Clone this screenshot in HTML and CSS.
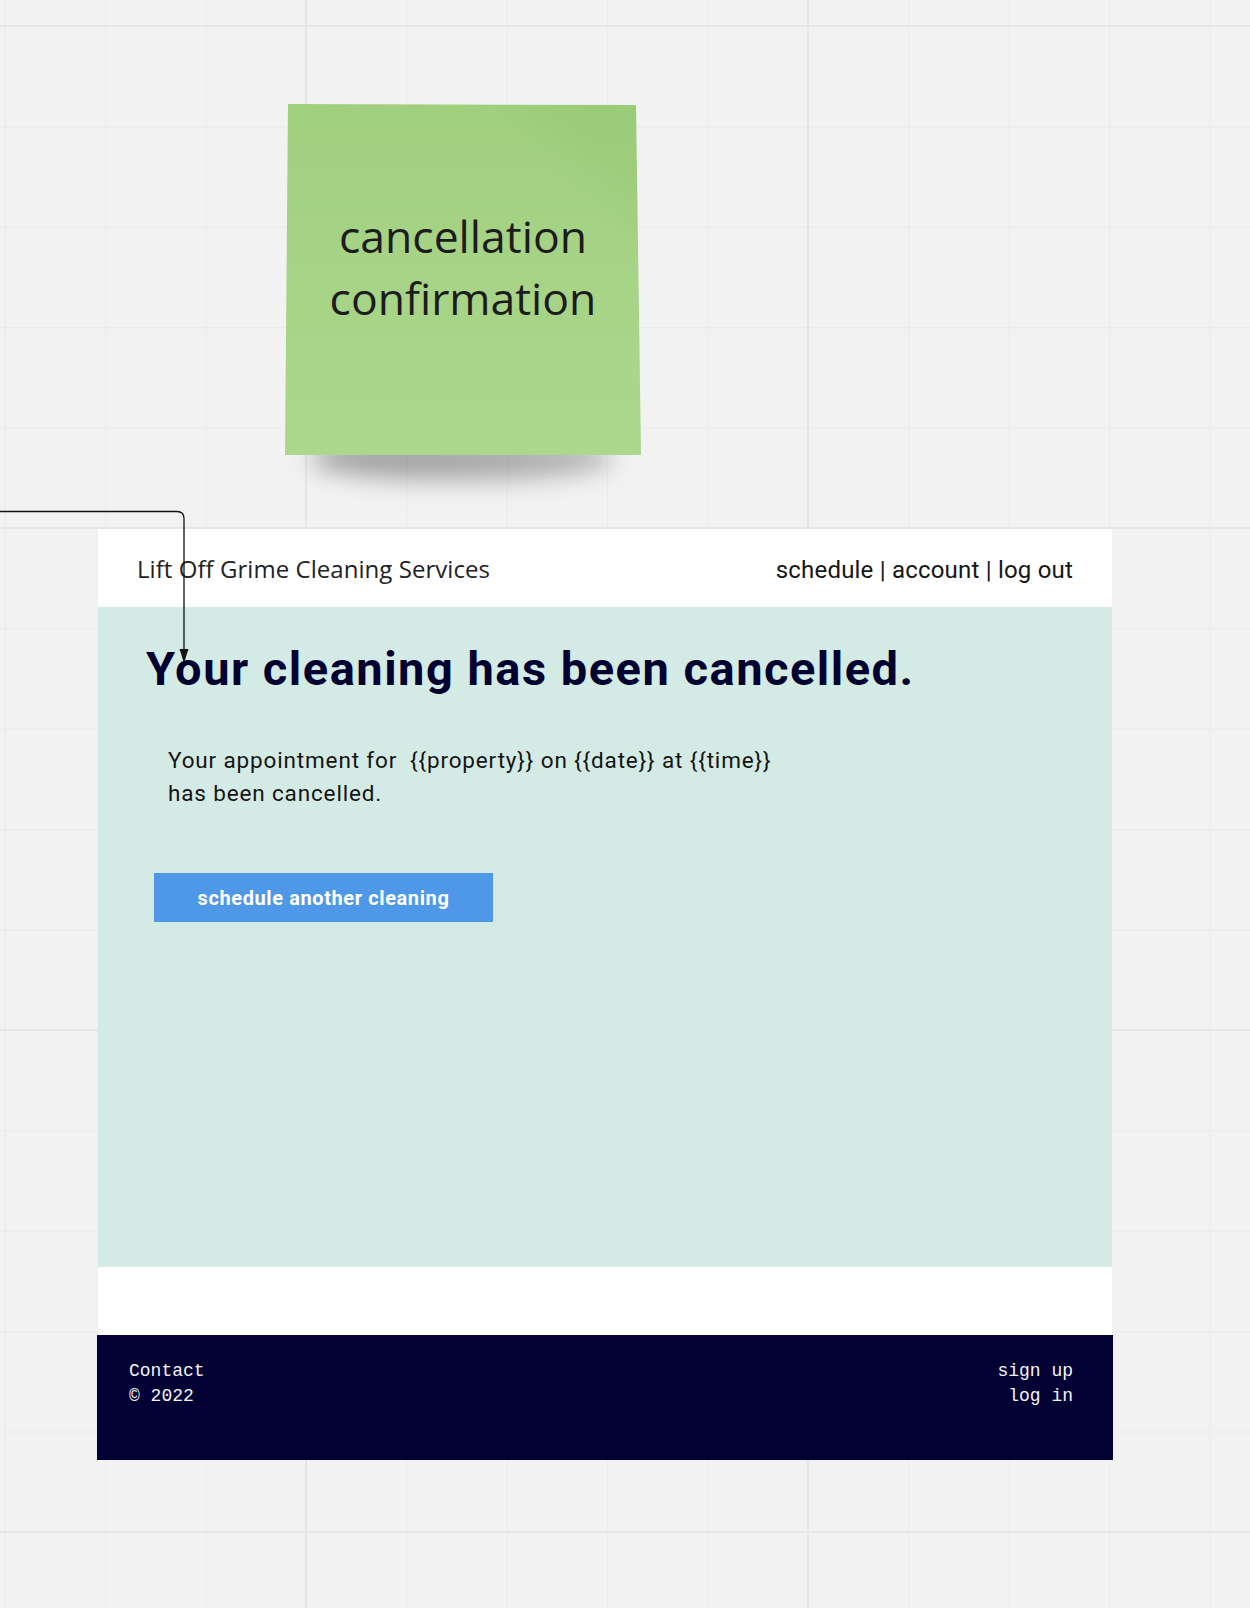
FILE: index.html
```html
<!DOCTYPE html>
<html lang="en">
<head>
<meta charset="utf-8">
<title>cancellation confirmation</title>
<link rel="stylesheet" href="styles.css">
</head>
<body>
<div class="canvas">
  <div class="note-shadow"></div>
  <div class="note">
    <p class="note-text">cancellation<br>confirmation</p>
  </div>

  <div class="frame">
    <header class="site-header">
      <div class="brand">Lift Off Grime Cleaning Services</div>
      <nav class="nav">schedule | account | log out</nav>
    </header>
    <main class="content">
      <h1 class="headline">Your cleaning has been cancelled.</h1>
      <p class="message">Your appointment for &nbsp;{{property}} on {{date}} at {{time}}<br>has been cancelled.</p>
      <button class="cta" type="button">schedule another cleaning</button>
    </main>
    <div class="spacer"></div>
    <footer class="site-footer">
      <div class="foot-left">Contact<br>© 2022</div>
      <div class="foot-right">sign up<br>log in</div>
    </footer>
  </div>

  <svg class="connector" width="200" height="680" viewBox="0 0 200 680" aria-hidden="true">
    <path d="M0 511.5 H177 Q184 511.5 184 518.5 V652" fill="none" stroke="#111" stroke-width="1.3"/>
    <polygon points="179.5,649 188.5,649 184,663" fill="#111"/>
  </svg>
</div>
</body>
</html>
```

FILE: styles.css
```css
html, body {
  margin: 0;
  padding: 0;
}

body {
  width: 1250px;
  height: 1608px;
  overflow: hidden;
  background-color: #f2f2f2;
  background-image:
    linear-gradient(to right, #e6e6e6 2px, transparent 2px),
    linear-gradient(to bottom, #e6e6e6 2px, transparent 2px),
    linear-gradient(to right, #eaeaea 1px, transparent 1px),
    linear-gradient(to bottom, #eaeaea 1px, transparent 1px);
  background-size: 502px 502px, 502px 502px, 100.4px 100.4px, 100.4px 100.4px;
  background-position: 305px 0, 0 25px, 4.8px 0, 0 26px;
  font-family: "Open Sans", "Liberation Sans", sans-serif;
}

.canvas {
  position: relative;
  width: 1250px;
  height: 1608px;
}

/* sticky note */
.note-shadow {
  position: absolute;
  left: 312px;
  top: 440px;
  width: 300px;
  height: 40px;
  border-radius: 40% 40% 50% 50%;
  background: linear-gradient(to right, rgba(0, 0, 0, 0.36), rgba(0, 0, 0, 0.26));
  filter: blur(12px);
}

.note {
  position: absolute;
  left: 285px;
  top: 104px;
  width: 356px;
  height: 351px;
  clip-path: polygon(3px 0, 351px 1px, 100% 100%, 0 100%);
  background:
    linear-gradient(225deg, rgba(120, 180, 90, 0.12) 0, rgba(120, 180, 90, 0.12) 60px, transparent 110px),
    linear-gradient(to bottom, #a0cf7e 0%, #a6d385 45%, #add68f 100%);
  display: flex;
  align-items: center;
  justify-content: center;
  padding-bottom: 26px;
  box-sizing: border-box;
}

.note-text {
  margin: 0;
  text-align: center;
  font-family: "Open Sans", sans-serif;
  font-size: 44.5px;
  line-height: 62px;
  color: #1c1c1c;
}

/* connector arrow */
.connector {
  position: absolute;
  left: 0;
  top: 0;
  z-index: 3;
}

/* page frame */
.frame {
  position: absolute;
  left: 98px;
  top: 529px;
  width: 1014px;
  display: flex;
  flex-direction: column;
  z-index: 1;
}

.site-header {
  height: 78px;
  background: #ffffff;
  display: flex;
  align-items: center;
  justify-content: space-between;
  padding: 0 39px 0 39px;
  box-sizing: border-box;
}

.brand {
  font-family: "Open Sans", sans-serif;
  font-size: 24px;
  font-weight: 400;
  color: #222222;
  letter-spacing: 0.05px;
}

.nav {
  font-family: "Roboto", "Liberation Sans", sans-serif;
  font-size: 24px;
  letter-spacing: 0.2px;
  color: #161616;
  padding-top: 4px;
}

.content {
  height: 660px;
  background: #d4ebe5;
  box-sizing: border-box;
  padding: 22px 0 0 0;
  display: flex;
  flex-direction: column;
  align-items: flex-start;
}

.headline {
  margin: 0 0 0 48px;
  font-family: "Roboto", "Liberation Sans", sans-serif;
  font-weight: 700;
  font-size: 47px;
  letter-spacing: 1.5px;
  line-height: 80px;
  color: #03012f;
}

.message {
  margin: 35px 0 0 70px;
  font-family: "Roboto", "Liberation Sans", sans-serif;
  font-size: 22.5px;
  letter-spacing: 0.85px;
  line-height: 32.6px;
  color: #141414;
}

.cta {
  margin: 64px 0 0 56px;
  width: 339px;
  height: 49px;
  border: 0;
  padding: 0;
  background: #4f98e8;
  color: #ffffff;
  font-family: "Roboto", "Liberation Sans", sans-serif;
  font-weight: 700;
  font-size: 20px;
  letter-spacing: 0.6px;
}

.spacer {
  height: 68px;
  background: #ffffff;
}

.site-footer {
  margin: 0 -1px;
  height: 125px;
  background: #030033;
  display: flex;
  justify-content: space-between;
  align-items: flex-start;
  padding: 24px 40px 0 32px;
  box-sizing: border-box;
  font-family: "Liberation Mono", "DejaVu Sans Mono", monospace;
  font-size: 18px;
  line-height: 25px;
  color: #f4f4f8;
}

.foot-right {
  text-align: right;
}
```
